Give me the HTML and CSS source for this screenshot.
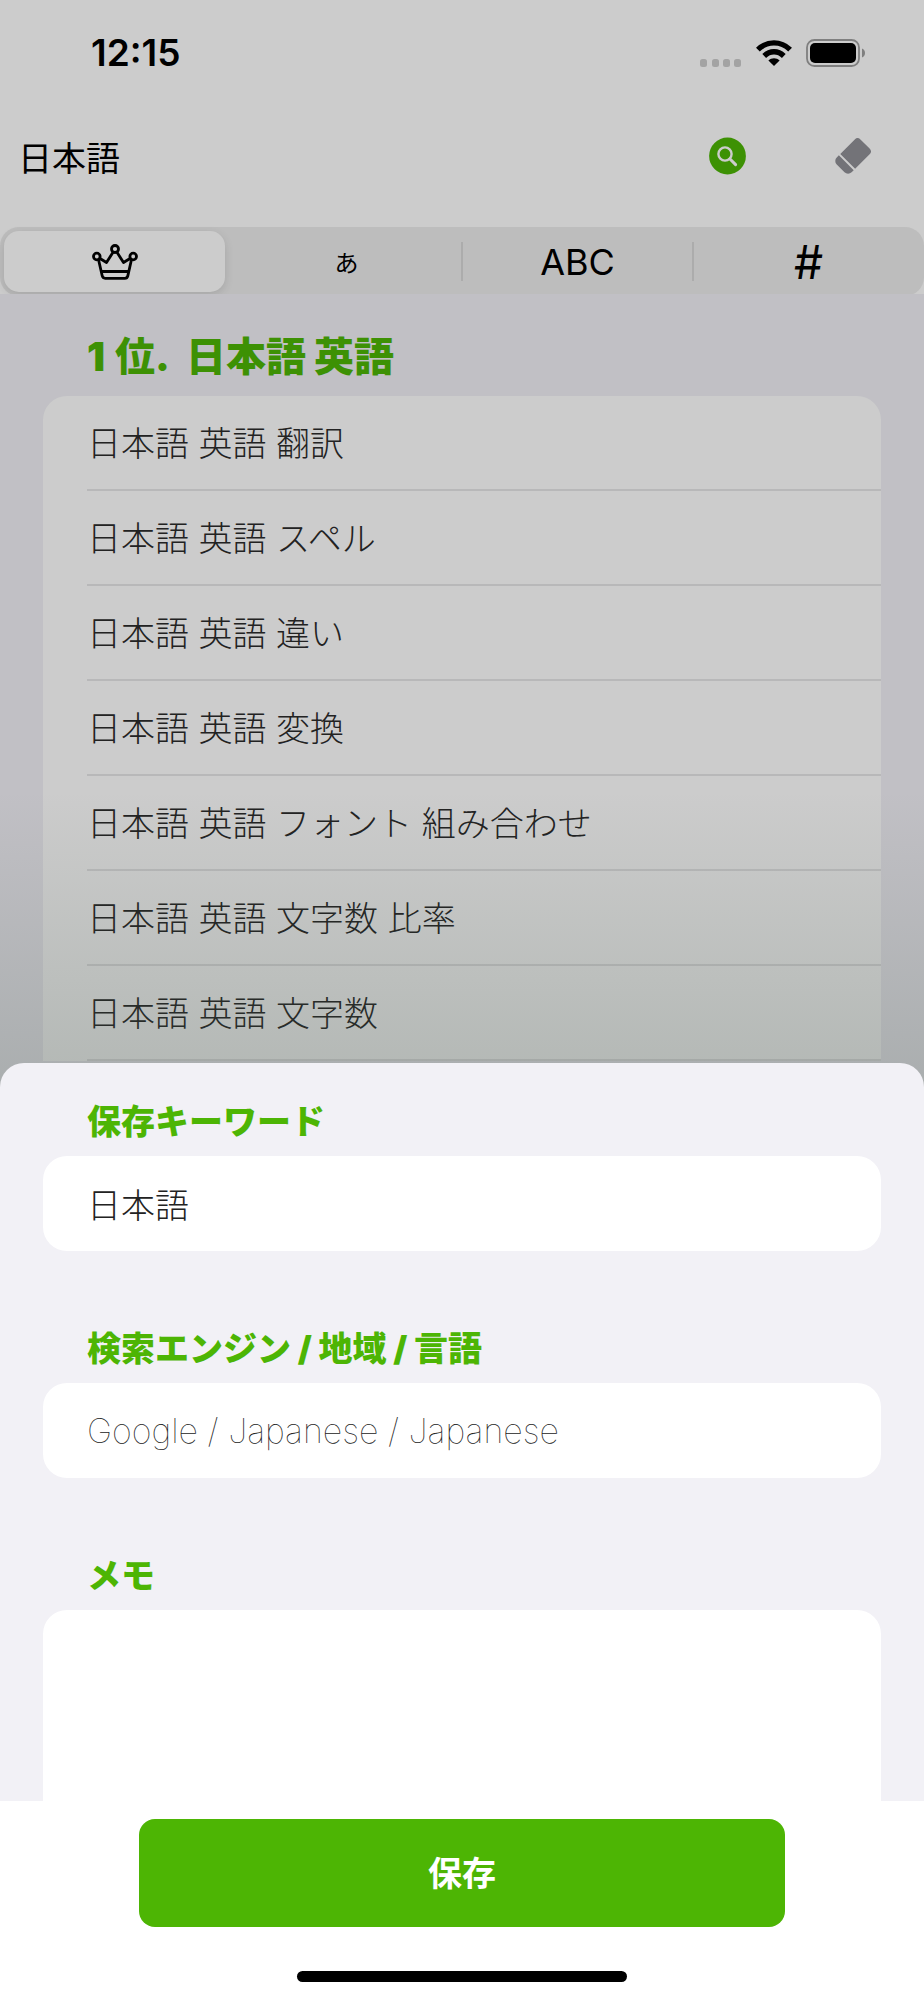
FILE: index.html
```html
<!DOCTYPE html>
<html lang="ja">
<head>
<meta charset="utf-8">
<meta name="viewport" content="width=device-width, initial-scale=1">
<title>日本語</title>
<link rel="stylesheet" href="styles.css">
</head>
<body>
<div class="app">
  <header class="top">
    <div class="status">
      <time class="clock">12:15</time>
      <div class="status-icons">
        <svg class="dots" width="44" height="28" viewBox="0 0 44 28" aria-hidden="true">
          <g fill="#a3a3a3"><rect x="1" y="20" width="7" height="8" rx="2.5"/><rect x="13" y="20" width="7" height="8" rx="2.5"/><rect x="24" y="20" width="7" height="8" rx="2.5"/><rect x="35" y="20" width="7" height="8" rx="2.5"/></g>
        </svg>
        <svg class="wifi" width="36" height="28" viewBox="0 0 36 28" aria-hidden="true">
          <g fill="none" stroke="#000" stroke-width="5.4"><path d="M1.9 10.6C11.2 1.6 24.8 1.6 34.1 10.6"/><path d="M8.2 17C14 11.4 22 11.4 27.8 17"/></g>
          <path d="M12.4 21.4C15.6 18.6 20.4 18.6 23.6 21.4L18 27Z"/>
        </svg>
        <svg class="battery" width="60" height="28" viewBox="0 0 60 28" aria-hidden="true">
          <rect x="1" y="1" width="52" height="26" rx="7.5" fill="none" stroke="#7f7f7f" stroke-width="1.8"/>
          <rect x="4" y="4" width="46" height="20" rx="5"/>
          <path d="M56 9.500c4 1.500 4 7.500 0 9z" fill="#7f7f7f"/>
        </svg>
      </div>
    </div>
    <form class="search">
      <input class="search-input" type="text" value="日本語" aria-label="検索キーワード">
      <button class="icon-button" type="button" aria-label="検索">
        <svg width="38" height="38" viewBox="0 0 38 38"><circle cx="19.500" cy="19" r="18.400" fill="#3d9104"/><circle cx="17" cy="17" r="6.600" fill="none" stroke="#ccc" stroke-width="2.400"/><path d="M22 22l5.600 5.600" stroke="#ccc" stroke-width="3" stroke-linecap="round"/></svg>
      </button>
      <button class="icon-button" type="button" aria-label="消去">
        <svg width="38" height="38" viewBox="0 0 38 38"><g fill="#737378" transform="rotate(-45 19 19)"><path d="M11.500 8.500H32a4 4 0 0 1 4 4v13a4 4 0 0 1-4 4H11.500z"/><path d="M9.500 8.500v21H6.500a5 5 0 0 1-5-5v-11a5 5 0 0 1 5-5z"/></g></svg>
      </button>
    </form>
    <nav class="segments">
      <button class="segment selected" type="button" aria-label="ランキング">
        <svg width="48" height="36" viewBox="0 0 48 36"><g fill="none" stroke="#000" stroke-width="2.800" stroke-linejoin="round"><circle cx="24" cy="5" r="3.500"/><circle cx="5.800" cy="12.500" r="3.300"/><circle cx="42.200" cy="12.500" r="3.300"/><path d="M7.500 15.500l3.700 16.300q.600 2.500 3 2.500h19.600q2.400 0 3-2.500l3.700-16.300M9 14.500l6.500 4L22.200 8M39 14.500l-6.500 4L25.800 8M10.200 27.500h27.600"/></g></svg>
      </button>
      <button class="segment kana" type="button">あ</button>
      <button class="segment alpha" type="button">ABC</button>
      <button class="segment sign" type="button">#</button>
    </nav>
  </header>

  <main class="results">
    <h2 class="rank-title"><span class="rank">1</span>位.&nbsp; 日本語 英語</h2>
    <ul class="list">
      <li class="row">日本語 英語 翻訳</li>
      <li class="row">日本語 英語 スペル</li>
      <li class="row">日本語 英語 違い</li>
      <li class="row">日本語 英語 変換</li>
      <li class="row">日本語 英語 フォント 組み合わせ</li>
      <li class="row">日本語 英語 文字数 比率</li>
      <li class="row">日本語 英語 文字数</li>
    </ul>
  </main>

  <section class="sheet">
    <div class="fields">
      <label class="field-title" for="keyword">保存キーワード</label>
      <input class="field" id="keyword" type="text" value="日本語">
      <label class="field-title" for="engine">検索エンジン / 地域 / 言語</label>
      <input class="field engine" id="engine" type="text" value="Google / Japanese / Japanese" readonly>
      <label class="field-title" for="memo">メモ</label>
      <textarea class="field memo" id="memo"></textarea>
    </div>
    <footer class="actions">
      <button class="save" type="button">保存</button>
      <div class="home-bar"></div>
    </footer>
  </section>
</div>
</body>
</html>
```
FILE: styles.css
```css
* { box-sizing: border-box; }

body {
  margin: 0;
  background: #fff;
  color: #000;
  font-family: Inter, "Noto Sans CJK JP", sans-serif;
}

button, input, textarea {
  margin: 0;
  padding: 0;
  border: 0;
  background: none;
  color: inherit;
  font: inherit;
}

.app {
  display: flex;
  flex-direction: column;
  min-height: 100vh;
}

.top { background: #ccc; }

.status {
  display: flex;
  align-items: center;
  justify-content: space-between;
  height: 105px;
  padding: 0 58px 0 91px;
}

.clock {
  font-size: 37px;
  font-weight: 600;
}

.status-icons { display: flex; }
.wifi { margin-left: 13px; }
.battery { margin-left: 14px; }

.search {
  display: flex;
  align-items: center;
  height: 122px;
  padding: 0 52px 20px 18px;
}

.search-input {
  flex: 1;
  min-width: 0;
  height: 60px;
  font-size: 34px;
  font-weight: 400;
}

.icon-button {
  display: flex;
  margin-left: 88px;
}

.segments {
  display: grid;
  grid-template-columns: repeat(4, 1fr);
  height: 69px;
  margin-bottom: -2px;
  padding: 4px 0;
  border-radius: 19px;
  background: #bdbdbd;
}

.segment {
  display: flex;
  align-items: center;
  justify-content: center;
  position: relative;
}

.selected {
  margin: 0 6px 0 4px;
  border-radius: 15px;
  background: #ccc;
  box-shadow: 0 3px 10px rgba(0, 0, 0, 0.12);
}

.alpha::before, .sign::before {
  content: "";
  position: absolute;
  left: -1px;
  top: 11px;
  bottom: 11px;
  width: 2px;
  background: #acacac;
}

.kana { font-size: 24px; }
.alpha { font-size: 36px; }
.sign { font-size: 46px; }

.results {
  position: relative;
  padding: 39px 43px 30px;
  background: #c1c0c5;
}

.results::after {
  content: "";
  position: absolute;
  inset: auto 0 0;
  height: 300px;
  background: linear-gradient(rgba(76, 100, 84, 0), rgba(76, 100, 84, 0.06) 30%, rgba(76, 100, 84, 0.2));
}

.rank-title {
  margin: 0 0 15px 44px;
  color: #3d9104;
  font-size: 40px;
  font-weight: 900;
  line-height: 48px;
}

.rank { margin-right: 10px; }

.list {
  margin: 0;
  padding: 0;
  border-radius: 24px 24px 0 0;
  background: #ccc;
  list-style: none;
}

.row {
  height: 95px;
  margin-left: 44px;
  border-bottom: 2px solid #b8b8b9;
  color: #222;
  font-size: 34px;
  font-weight: 300;
  line-height: 95px;
}

.sheet {
  display: flex;
  flex: 1;
  flex-direction: column;
  position: relative;
  margin-top: -28px;
  border-radius: 24px 24px 0 0;
  background: #f2f1f6;
}

.fields {
  display: flex;
  flex: 1;
  flex-direction: column;
  padding: 0 43px;
}

.field-title {
  height: 93px;
  padding: 35px 44px 10px;
  color: #4db504;
  font-size: 34px;
  font-weight: 900;
  line-height: 48px;
}

.field {
  height: 95px;
  margin-bottom: 39px;
  padding: 0 44px;
  border-radius: 24px;
  background: #fff;
  color: #222;
  font-size: 34px;
  font-weight: 300;
}

.engine { font-weight: 100; }

.memo {
  flex: 1;
  min-height: 190px;
  margin-bottom: 0;
  padding: 24px 44px;
  border-radius: 24px 24px 0 0;
  resize: none;
}

.actions {
  display: flex;
  flex-direction: column;
  align-items: center;
  padding: 18px 0;
  background: #fff;
}

.save {
  width: 70%;
  height: 108px;
  padding-bottom: 4px;
  border-radius: 16px;
  background: #4db504;
  color: #fff;
  font-size: 34px;
  font-weight: 600;
}

.home-bar {
  width: 330px;
  height: 11px;
  margin-top: 44px;
  border-radius: 6px;
  background: #000;
}
```
